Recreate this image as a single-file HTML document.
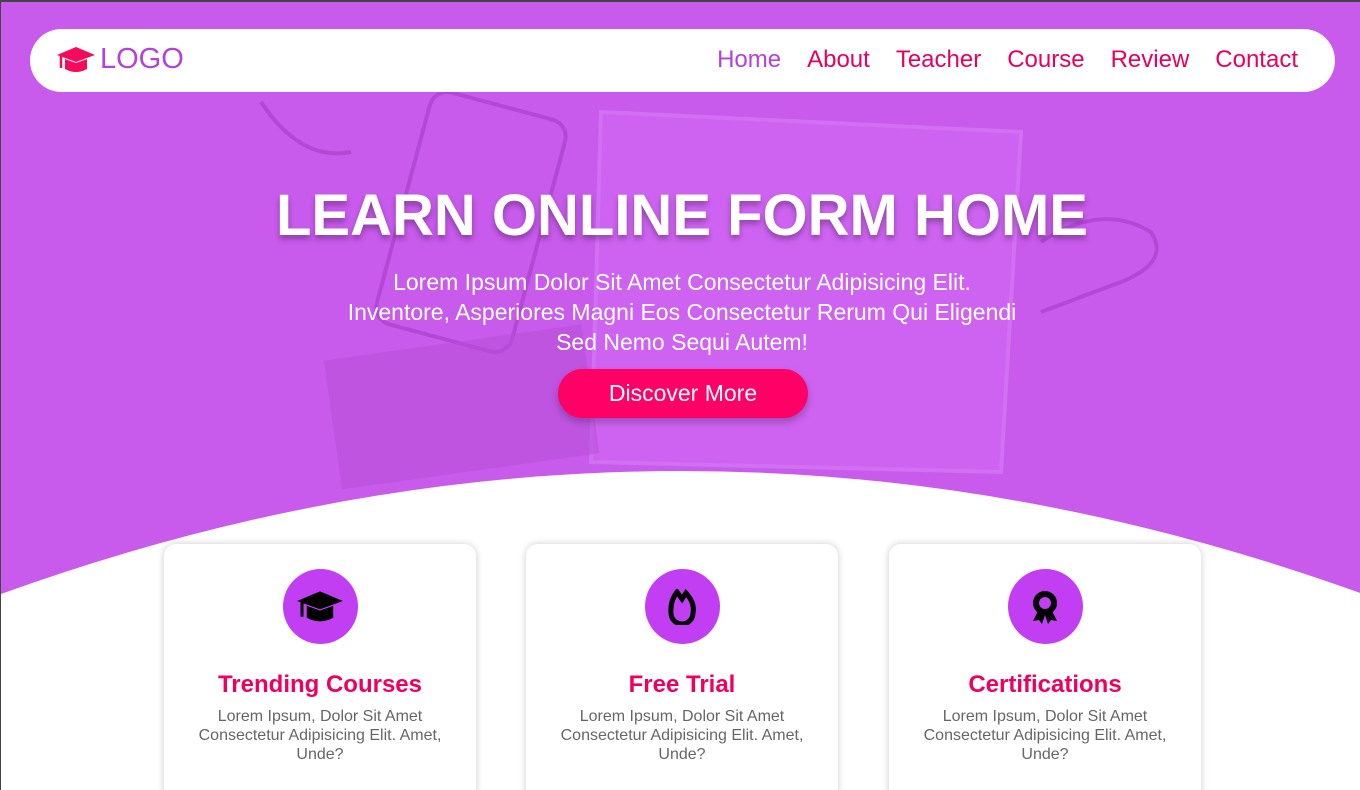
<!DOCTYPE html>
<html style="width:1360px;height:790px;overflow:hidden"><head><style>
*{margin:0;padding:0;box-sizing:border-box}
body{width:1360px;height:790px;overflow:hidden;font-family:"Liberation Sans",sans-serif;position:relative;background:#c95bec;border-top:2px solid #444;border-left:1px solid #444}
.bg{position:absolute;inset:0;background:#c85aec}
.nav{position:absolute;left:29px;top:27px;width:1305px;height:63px;background:#fff;border-radius:32px}
.logo{position:absolute;left:26px;top:14px;font-size:29px;color:#b440e0;display:flex;align-items:center;gap:4px}
.links{position:absolute;right:37px;top:17px;font-size:24px;color:#e8005e}
.links span{margin-left:26px}
h1{position:absolute;left:0;width:1362px;top:180px;text-align:center;color:#fff;font-size:58px;font-weight:bold;text-shadow:0 4px 6px rgba(0,0,0,.3)}
.p{position:absolute;left:280px;width:802px;top:265px;text-align:center;color:#fff;font-size:23px;line-height:30px}
.btn{position:absolute;left:557px;top:367px;width:250px;height:49px;border-radius:25px;background:#ff0066;color:#fff;font-size:23px;text-align:center;line-height:49px;box-shadow:0 4px 8px rgba(0,0,0,.25)}
.card{position:absolute;top:542px;width:312px;height:270px;background:#fff;border-radius:12px;box-shadow:0 0 8px rgba(0,0,0,.2);text-align:center}
.ic{width:75px;height:75px;border-radius:50%;background:#c23ef2;margin:25px auto 0;display:flex;align-items:center;justify-content:center}
.card h3{color:#f0005e;font-size:24px;margin-top:27px}
.card p{color:#666;font-size:16px;line-height:19px;margin:8px 25px 0}
</style></head><body>
<div class="bg"></div>
<svg style="position:absolute;left:0;top:0" width="1360" height="790">
<g fill="none" stroke="#a83dc8" stroke-width="4" opacity=".6">
<rect x="400" y="100" width="140" height="240" rx="18" transform="rotate(15 470 220)"/>
<path d="M600 110 L1020 130 L1000 470 L590 460Z" stroke="#d87ff5" fill="#d36af5"/>
<path d="M1040 240 q60-40 110 -10 q20 30-30 50 l-80 30"/>
<path d="M260 100 q40 60 90 50"/>
</g>
<g fill="#b74fd8" opacity=".5"><rect x="330" y="340" width="260" height="130" transform="rotate(-8 460 400)"/></g>
<path d="M0 592 Q680 346 1362 592 L1362 800 L0 800Z" fill="#fff"/>
</svg>
<div class="nav">
<div class="logo"><svg width="40" height="30" viewBox="0 0 40 30"><path d="M20 2 L39 10 L20 17 L1 10Z" fill="#f50a5c"/><path d="M9 14 v10 q11 6 22 0 v-10 l-11 4z" fill="#f50a5c"/><path d="M5 11 v12" stroke="#f50a5c" stroke-width="2.5"/></svg>LOGO</div>
<div class="links"><span style="color:#b440e0">Home</span><span>About</span><span>Teacher</span><span>Course</span><span>Review</span><span>Contact</span></div>
</div>
<h1>LEARN ONLINE FORM HOME</h1>
<div class="p">Lorem Ipsum Dolor Sit Amet Consectetur Adipisicing Elit.<br>Inventore, Asperiores Magni Eos Consectetur Rerum Qui Eligendi<br>Sed Nemo Sequi Autem!</div>
<div class="btn">Discover More</div>
<div class="card" style="left:163px"><div class="ic"><svg width="48" height="36" viewBox="0 0 40 30"><path d="M20 2 L39 10 L20 17 L1 10Z"/><path d="M9 14 v10 q11 6 22 0 v-10 l-11 4z"/><path d="M5 11 v12" stroke="#000" stroke-width="2.5"/></svg></div><h3>Trending Courses</h3><p>Lorem Ipsum, Dolor Sit Amet Consectetur Adipisicing Elit. Amet, Unde?</p></div>
<div class="card" style="left:525px"><div class="ic"><svg width="30" height="36" viewBox="0 0 30 36"><path d="M10 3 L15 10 L19 4 Q28 14 26 24 A11 11 0 0 1 4 24 Q3 12 10 3Z" fill="none" stroke="#000" stroke-width="5"/></svg></div><h3>Free Trial</h3><p>Lorem Ipsum, Dolor Sit Amet Consectetur Adipisicing Elit. Amet, Unde?</p></div>
<div class="card" style="left:888px"><div class="ic"><svg width="30" height="36" viewBox="0 0 30 36"><path d="M8 22 L3 32 L9 31 L12 35 L15 26 L18 35 L21 31 L27 32 L22 22Z"/><circle cx="15" cy="14" r="12"/><circle cx="15" cy="14" r="6" fill="#c23ef2"/></svg></div><h3>Certifications</h3><p>Lorem Ipsum, Dolor Sit Amet Consectetur Adipisicing Elit. Amet, Unde?</p></div>
</body></html>
